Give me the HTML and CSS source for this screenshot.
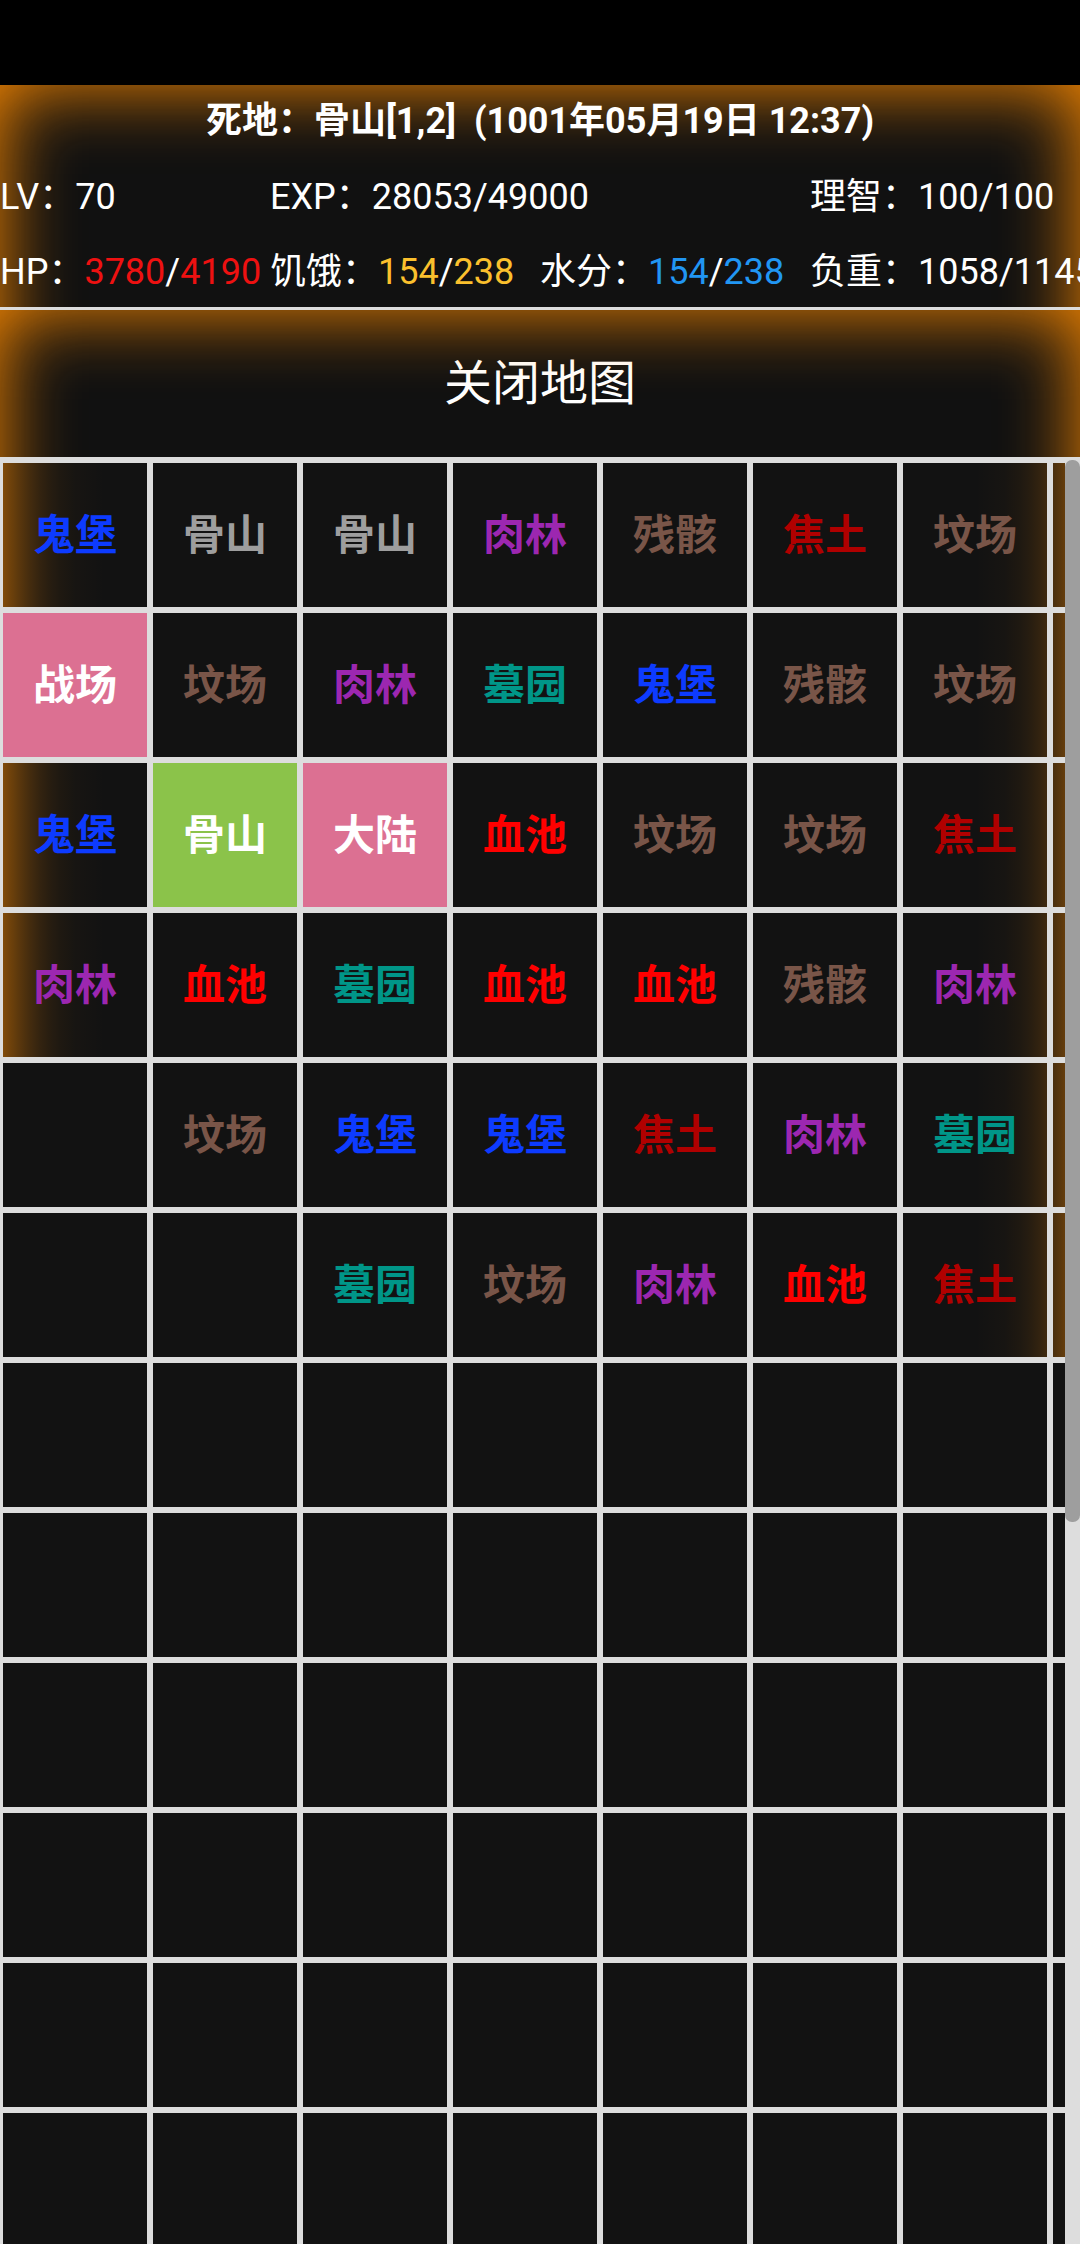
FILE: index.html
```html
<!DOCTYPE html>
<html lang="zh">
<head>
<meta charset="utf-8">
<title>地图</title>
<link rel="stylesheet" href="styles.css">
</head>
<body>
<div class="app">
  <div class="status-bar"></div>
  <header class="panel stats">
    <div class="title">死地：骨山[1,2]&nbsp; (1001年05月19日 12:37)</div>
    <div class="stat-row">
      <div class="stat">LV：70</div>
      <div class="stat span2">EXP：28053/49000</div>
      <div class="stat">理智：100/100</div>
    </div>
    <div class="stat-row">
      <div class="stat">HP：<span class="red">3780</span>/<span class="red">4190</span></div>
      <div class="stat">饥饿：<span class="amber">154</span>/<span class="amber">238</span></div>
      <div class="stat">水分：<span class="blue">154</span>/<span class="blue">238</span></div>
      <div class="stat">负重：1058/1145</div>
    </div>
  </header>
  <div class="panel close-btn">关闭地图</div>
  <main class="map">
    <div class="grid" id="grid"></div>
    <div class="scrollbar"><div class="thumb"></div></div>
  </main>
</div>
<script src="map.js"></script>
</body>
</html>
```
FILE: styles.css
```css
* { box-sizing: border-box; }
html, body { margin: 0; padding: 0; background: #000; }
body {
  width: 1080px;
  height: 2244px;
  overflow: hidden;
  font-family: Roboto, "Noto Sans CJK SC", sans-serif;
  color: #fff;
}
.app { display: flex; flex-direction: column; height: 2244px; }
.status-bar { height: 85px; background: #000; flex: none; }
.panel { position: relative; overflow: hidden; background: #111; flex: none; }
.panel::before {
  content: "";
  position: absolute;
  left: 0; right: 0; top: 0; bottom: -150px;
  box-shadow: inset 0 0 75px #ff8c00;
  pointer-events: none;
}
.panel > * { position: relative; }
.stats { height: 222px; }
.title {
  height: 75px;
  line-height: 72px;
  font-size: 36px;
  font-weight: 700;
  text-align: center;
  white-space: nowrap;
}
.stat-row {
  display: grid;
  grid-template-columns: repeat(4, 270px);
  height: 75px;
  line-height: 75px;
  font-size: 36px;
  white-space: nowrap;
}
.stat { min-width: 0; }
.span2 { grid-column: span 2; }
.red { color: #ee1111; }
.amber { color: #fbc02d; }
.blue { color: #2196f3; }
.close-btn {
  height: 150px;
  border-top: 3px solid #ddd;
  font-size: 48px;
  line-height: 147px;
  text-align: center;
}
.map { position: relative; flex: 1; min-height: 0; overflow: hidden; background: #ddd; }
.grid {
  display: grid;
  grid-template-columns: repeat(8, 144px);
  grid-auto-rows: 144px;
  gap: 6px;
  padding: 6px 0 0 3px;
  width: 1300px;
}
.cell {
  background: #121212;
  display: flex;
  align-items: center;
  justify-content: center;
  padding-bottom: 8px;
  font-size: 42px;
  font-weight: 700;
  white-space: nowrap;
}
.seen {
  background-color: #121212;
  background-attachment: fixed;
  background-image:
    linear-gradient(to right, rgba(255,140,0,.5) 0, rgba(255,140,0,.395) 10px, rgba(255,140,0,.297) 20px, rgba(255,140,0,.212) 30px, rgba(255,140,0,.143) 40px, rgba(255,140,0,.091) 50px, rgba(255,140,0,.055) 60px, rgba(255,140,0,.023) 75px, rgba(255,140,0,0) 105px),
    linear-gradient(to left, rgba(255,140,0,.5) 0, rgba(255,140,0,.395) 10px, rgba(255,140,0,.297) 20px, rgba(255,140,0,.212) 30px, rgba(255,140,0,.143) 40px, rgba(255,140,0,.091) 50px, rgba(255,140,0,.055) 60px, rgba(255,140,0,.023) 75px, rgba(255,140,0,0) 105px);
}
.ghost { color: #0d3bff; }
.bone { color: #9e9e9e; }
.flesh { color: #9c27b0; }
.remains { color: #795548; }
.scorch { color: #b00000; }
.grave { color: #795548; }
.battle { background: #dc7092; color: #fff; }
.here { background: #8bc34a; color: #fff; }
.cemetery { color: #009688; }
.blood { color: #ff0000; }
.scrollbar {
  position: absolute;
  top: 0; right: 0; bottom: 0;
  width: 15px;
  background: #ddd;
}
.thumb {
  position: absolute;
  top: 3px; left: 0;
  width: 15px;
  height: 1062px;
  border-radius: 7px;
  background: #9e9e9e;
}
```
FILE: map.js
```js
var K = {
  '鬼堡': 'ghost', '骨山': 'bone', '肉林': 'flesh', '残骸': 'remains', '焦土': 'scorch',
  '坟场': 'grave', '战场': 'battle', '墓园': 'cemetery', '血池': 'blood', '大陆': 'battle'
};
var rows = [
  ['鬼堡','骨山','骨山','肉林','残骸','焦土','坟场','?'],
  ['战场','坟场','肉林','墓园','鬼堡','残骸','坟场','?'],
  ['鬼堡','!骨山','大陆','血池','坟场','坟场','焦土','?'],
  ['肉林','血池','墓园','血池','血池','残骸','肉林','?'],
  ['','坟场','鬼堡','鬼堡','焦土','肉林','墓园','?'],
  ['','','墓园','坟场','肉林','血池','焦土','?']
];
var grid = document.getElementById('grid');
for (var r = 0; r < 12; r++) {
  for (var c = 0; c < 8; c++) {
    var v = rows[r] ? rows[r][c] : '';
    var d = document.createElement('div');
    d.className = 'cell';
    if (v === '?') {
      d.className += ' seen';
    } else if (v.charAt(0) === '!') {
      d.className += ' here';
      d.textContent = v.slice(1);
    } else if (v) {
      d.className += ' seen ' + K[v];
      d.textContent = v;
    }
    grid.appendChild(d);
  }
}
```
